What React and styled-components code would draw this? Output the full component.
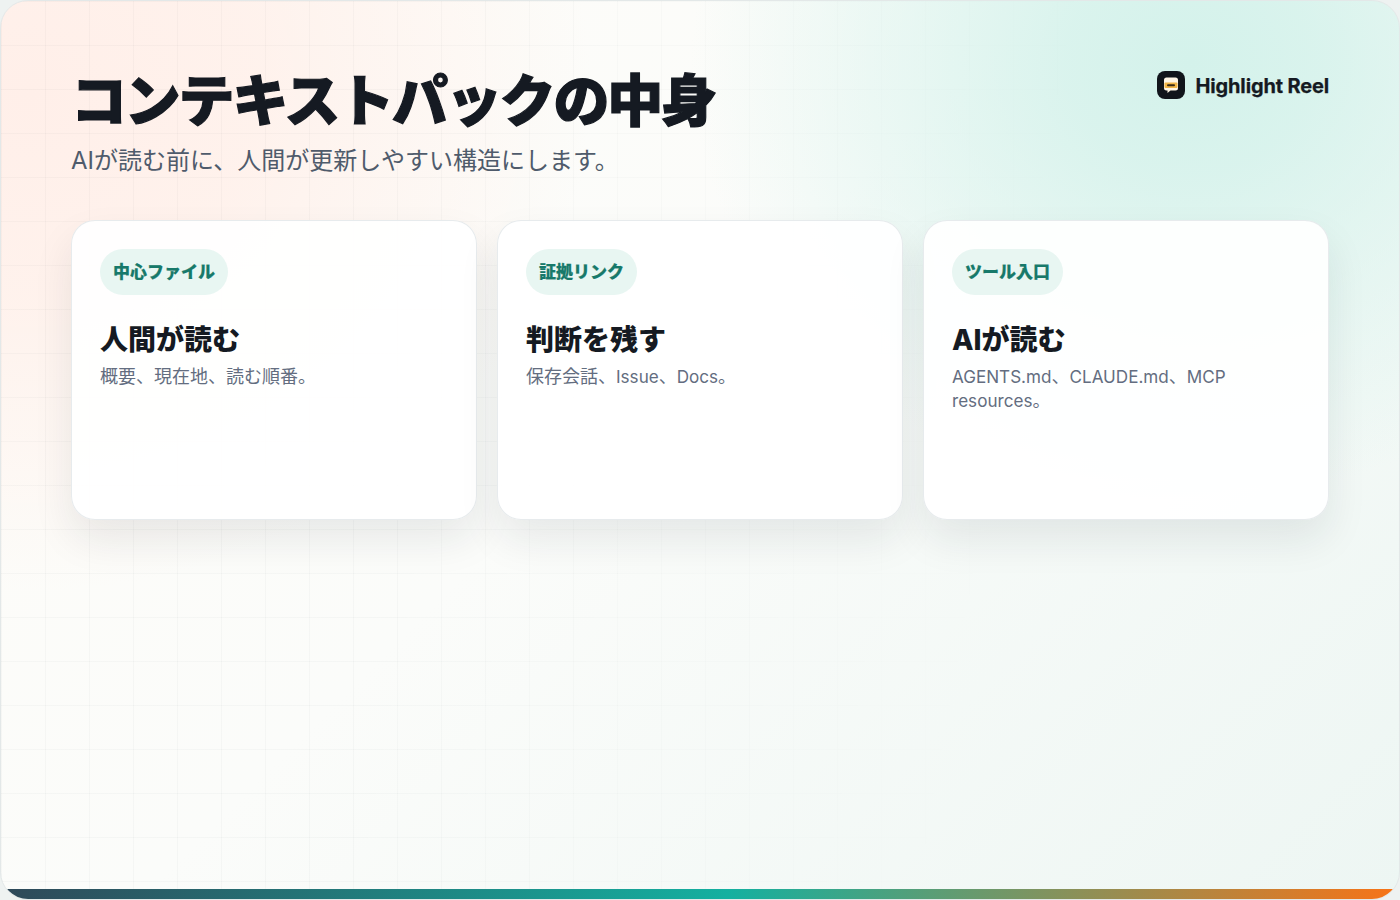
import React from "react";
import styled, { createGlobalStyle } from "styled-components";

const Global = createGlobalStyle`
  html, body { margin: 0; padding: 0; background: #eef2f1; }
  * { box-sizing: border-box; }
  body { font-family: Inter, "Noto Sans CJK JP", sans-serif; }
`;

const Frame = styled.main`
  position: relative;
  width: 1400px;
  height: 900px;
  overflow: hidden;
  border: 1px solid #e3e8e8;
  border-radius: 28px;
  padding: 60px 70px 0;
  background:
    radial-gradient(ellipse 500px 440px at 1190px 60px, rgba(212, 242, 235, 1) 0%, rgba(212, 242, 235, 0.85) 25%, rgba(212, 242, 235, 0) 100%),
    radial-gradient(ellipse 560px 500px at 30px 90px, rgba(255, 239, 233, 1) 0%, rgba(255, 240, 234, 0.85) 40%, rgba(255, 246, 236, 0) 100%),
    linear-gradient(135deg, #fefcf8 0%, #fbfcfa 45%, #edf6f3 100%);

  &::before {
    content: "";
    position: absolute;
    inset: 0;
    pointer-events: none;
    background:
      linear-gradient(rgba(20, 40, 50, 0.028) 1px, transparent 1px) 0 0 / 44px 44px,
      linear-gradient(90deg, rgba(20, 40, 50, 0.028) 1px, transparent 1px) 0 0 / 44px 44px;
    -webkit-mask-image: linear-gradient(100deg, #000 0%, #000 30%, transparent 72%);
    mask-image: linear-gradient(100deg, #000 0%, #000 30%, transparent 72%);
  }
`;

const Header = styled.header`
  position: relative;
  display: flex;
  justify-content: space-between;
  align-items: flex-start;
  height: 159px;
`;

const Title = styled.h1`
  margin: 0;
  font-size: 56px;
  line-height: 80px;
  font-weight: 900;
  letter-spacing: -2.2px;
  color: #151a22;
  -webkit-text-stroke: 1.2px #151a22;
  font-family: Inter, "Noto Sans CJK JP", sans-serif;
`;

const Subtitle = styled.p`
  margin: 2px 0 0;
  font-size: 24px;
  line-height: 36px;
  color: #4f5b6b;
`;

const Brand = styled.div`
  display: flex;
  align-items: center;
  gap: 11px;
  margin-top: 10px;
  font-size: 20px;
  font-weight: 700;
  letter-spacing: -0.15px;
  color: #151a22;
`;

const BrandName = styled.span`
  margin-top: 2px;
  -webkit-text-stroke: 0.25px #151a22;
`;

const Cards = styled.section`
  position: relative;
  display: grid;
  grid-template-columns: repeat(3, 1fr);
  gap: 20px;
`;

const Card = styled.article`
  height: 300px;
  padding: 28px;
  border: 1px solid rgba(225, 230, 232, 0.8);
  border-radius: 24px;
  background: rgba(255, 255, 255, 0.92);
  box-shadow: 0 20px 40px rgba(20, 40, 50, 0.085);
`;

const Tag = styled.span`
  display: inline-block;
  height: 46px;
  padding: 0 13px;
  border-radius: 999px;
  background: #e8f6f2;
  color: #17796a;
  font-size: 17px;
  font-weight: 800;
  line-height: 46px;
  -webkit-text-stroke: 0.2px #17796a;
`;

const CardTitle = styled.h2`
  margin: 25px 0 0;
  font-size: 28px;
  line-height: 40px;
  font-weight: 800;
  color: #151a22;
`;

const CardText = styled.p`
  margin: 4.5px 0 0;
  font-size: 18px;
  line-height: 24.5px;
  color: #636d80;
`;

const Latin = styled.span`
  font-size: 17.1px;
`;

const Bar = styled.div`
  position: absolute;
  left: -1px;
  right: -1px;
  bottom: 0;
  height: 10px;
  background: linear-gradient(90deg, #2f4858 0%, #14b0a0 52%, #f97316 100%);
`;

const Logo = () => (
  <svg width="28" height="28" viewBox="0 0 28 28" aria-hidden="true">
    <rect width="28" height="28" rx="8" fill="#11151b" />
    <path d="M9.500 6.500h9A2.500 2.500 0 0 1 21 9v8a2.500 2.500 0 0 1-2.500 2.500h-5l-3 2.600v-2.600h-1A2.500 2.500 0 0 1 7 17V9a2.500 2.500 0 0 1 2.500-2.500z" fill="#fff6e6" />
    <rect x="7.500" y="11.500" width="13" height="5.500" rx="1" fill="#f2b648" />
    <rect x="10" y="13.200" width="8" height="2" rx="1" fill="#3a2c18" />
  </svg>
);

const data = [
  { tag: "中心ファイル", title: "人間が読む", text: ["概要、現在地、読む順番。"] },
  { tag: "証拠リンク", title: "判断を残す", text: ["保存会話、", <Latin key="a">Issue</Latin>, "、", <Latin key="b">Docs</Latin>, "。"] },
  { tag: "ツール入口", title: "AIが読む", text: [<Latin key="a">AGENTS.md</Latin>, "、", <Latin key="b">CLAUDE.md</Latin>, "、", <Latin key="c">MCP</Latin>, " ", <Latin key="d">resources</Latin>, "。"] },
];

export default function App() {
  return (
    <Frame>
      <Global />
      <Header>
        <div>
          <Title>コンテキストパックの中身</Title>
          <Subtitle>AIが読む前に、人間が更新しやすい構造にします。</Subtitle>
        </div>
        <Brand>
          <Logo />
          <BrandName>Highlight Reel</BrandName>
        </Brand>
      </Header>
      <Cards>
        {data.map((d) => (
          <Card key={d.tag}>
            <Tag>{d.tag}</Tag>
            <CardTitle>{d.title}</CardTitle>
            <CardText>{d.text}</CardText>
          </Card>
        ))}
      </Cards>
      <Bar />
    </Frame>
  );
}
